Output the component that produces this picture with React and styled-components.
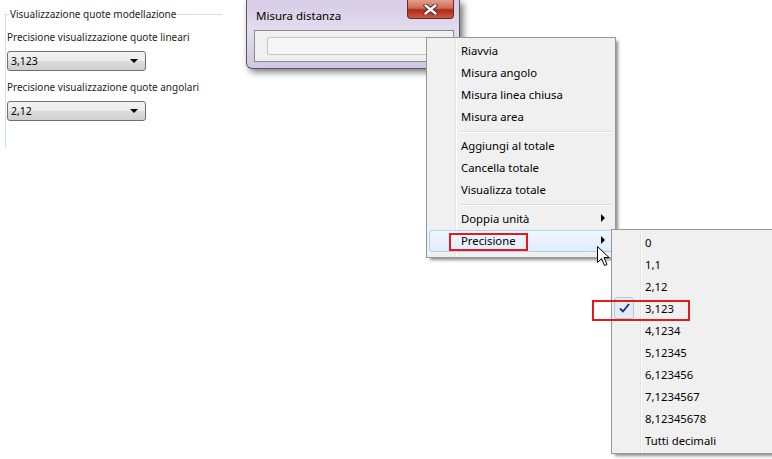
import styled, { createGlobalStyle } from "styled-components";

const GlobalStyle = createGlobalStyle`
  html, body {
    margin: 0;
    padding: 0;
    background: #ffffff;
  }
  body {
    font-family: "Noto Sans", "Open Sans", sans-serif;
    color: #000;
  }
`;

const mainItems = [
  { label: "Riavvia" },
  { label: "Misura angolo" },
  { label: "Misura linea chiusa" },
  { label: "Misura area" },
  { sep: true },
  { label: "Aggiungi al totale" },
  { label: "Cancella totale" },
  { label: "Visualizza totale" },
  { sep: true },
  { label: "Doppia unità", sub: true },
  { label: "Precisione", sub: true, active: true, marked: true },
];

const precisionItems = [
  "0",
  "1,1",
  "2,12",
  "3,123",
  "4,1234",
  "5,12345",
  "6,123456",
  "7,1234567",
  "8,12345678",
  "Tutti decimali",
];

const App = () => {
  return (
    <Page>
      <GlobalStyle />
      <OptionsPanel>
        <GroupBox>
          <Legend>Visualizzazione quote modellazione</Legend>
          <FieldLabel>Precisione visualizzazione quote lineari</FieldLabel>
          <Combo>
            <span>3,123</span>
            <ComboArrow />
          </Combo>
          <FieldLabel>Precisione visualizzazione quote angolari</FieldLabel>
          <Combo>
            <span>2,12</span>
            <ComboArrow />
          </Combo>
        </GroupBox>
      </OptionsPanel>

      <Dialog>
        <TitleBar>
          <Title>Misura distanza</Title>
          <CloseButton>
            <svg width="15" height="11" viewBox="0 0 15 11">
              <path
                d="M2.5 1.5 L12.5 9.5 M12.5 1.5 L2.5 9.5"
                stroke="#3a2a28"
                strokeWidth="4.2"
                strokeLinecap="round"
              />
              <path
                d="M2.5 1.5 L12.5 9.5 M12.5 1.5 L2.5 9.5"
                stroke="#ffffff"
                strokeWidth="2.4"
                strokeLinecap="round"
              />
            </svg>
          </CloseButton>
        </TitleBar>
        <ClientArea>
          <TextBox />
        </ClientArea>
      </Dialog>

      <ContextMenu>
        {mainItems.map((item, i) =>
          item.sep ? (
            <Separator key={i} />
          ) : (
            <MenuItem key={i} $active={item.active}>
              <span>{item.label}</span>
              {item.sub && <SubArrow />}
              {item.marked && <Marker $left={19} $top={2} $w={79} $h={18} />}
            </MenuItem>
          )
        )}
      </ContextMenu>

      <SubMenu>
        {precisionItems.map((label) => (
          <SubItem key={label}>
            {label === "3,123" && (
              <CheckBox>
                <svg width="11" height="10" viewBox="0 0 11 10">
                  <path
                    d="M1 5.5 L4 8.5 L10 1"
                    fill="none"
                    stroke="#1c2a86"
                    strokeWidth="1.8"
                  />
                </svg>
              </CheckBox>
            )}
            {label}
          </SubItem>
        ))}
      </SubMenu>

      <Marker $left={592} $top={300} $w={98} $h={21} />

      <Cursor width="13" height="21" viewBox="0 0 13 21">
        <path
          d="M0.5 0.5 L0.5 16.5 L4.5 12.5 L7.5 19.5 L10 18.5 L7 11.5 L12 11.5 Z"
          fill="#ffffff"
          stroke="#000000"
          strokeWidth="1"
        />
      </Cursor>
    </Page>
  );
};

export default App;

const Page = styled.div`
  position: relative;
  width: 772px;
  height: 459px;
  overflow: hidden;
  background: #ffffff;
`;

const OptionsPanel = styled.div`
  padding: 7px 0 0 5px;
  width: 217px;
`;

const GroupBox = styled.fieldset`
  margin: 0;
  padding: 0 0 0 1px;
  height: 140px;
  border: none;
  border-top: 1px solid #d5dfe5;
  border-left: 1px solid #d5dfe5;
  display: flex;
  flex-direction: column;
  align-items: flex-start;
`;

const Legend = styled.legend`
  font-size: 10px;
  color: #222222;
  padding: 0 1px;
  margin-left: 2px;
  line-height: 14px;
`;

const FieldLabel = styled.div`
  font-size: 10px;
  color: #1e1e1e;
  line-height: 14px;
  margin-top: 9px;
  margin-bottom: 7px;
`;

const Combo = styled.div`
  box-sizing: border-box;
  width: 139px;
  height: 20px;
  border: 1px solid #707070;
  border-radius: 3px;
  background: linear-gradient(#f3f3f3, #ebebeb 50%, #dddddd 50%, #cfcfcf);
  display: flex;
  align-items: center;
  padding: 0 7px 0 3px;
  font-size: 10.5px;
  color: #000;
`;

const ComboArrow = styled.i`
  margin-left: auto;
  width: 0;
  height: 0;
  border-left: 4px solid transparent;
  border-right: 4px solid transparent;
  border-top: 4px solid #000;
`;

const Dialog = styled.div`
  position: absolute;
  left: 246px;
  top: 0;
  width: 214px;
  box-sizing: border-box;
  border: 1px solid #5a5a5a;
  border-top: none;
  border-radius: 0 0 6px 6px;
  background: linear-gradient(180deg, #d6cce6 0%, #e3dcee 45%, #d2c6e2 100%);
  box-shadow: 3px 3px 7px rgba(0, 0, 0, 0.55);
  padding-bottom: 6px;
`;

const TitleBar = styled.div`
  height: 30px;
  display: flex;
  align-items: flex-start;
`;

const Title = styled.div`
  padding: 8px 0 0 9px;
  font-size: 11.5px;
  line-height: 16px;
  color: #000;
`;

const CloseButton = styled.div`
  margin-left: auto;
  margin-right: 5px;
  width: 47px;
  height: 19px;
  box-sizing: border-box;
  border: 1px solid #6b2a22;
  border-top: none;
  border-radius: 0 0 4px 4px;
  background: linear-gradient(#e2a08c 0%, #cf6a55 45%, #b02a18 55%, #c95a40 100%);
  display: flex;
  align-items: center;
  justify-content: center;
`;

const ClientArea = styled.div`
  margin: 0 5px 0 7px;
  height: 32px;
  box-sizing: border-box;
  border: 1px solid #8a8a8a;
  background: #f0f0f0;
  padding: 6px 0 0 12px;
`;

const TextBox = styled.div`
  height: 18px;
  width: 200px;
  box-sizing: border-box;
  border: 1px solid #c5c5c5;
  border-radius: 2px;
  background: #f6f6f6;
`;

const gutter = `linear-gradient(to right, transparent 28px, #e2e3e3 28px, #e2e3e3 29px, #ffffff 29px, #ffffff 30px, transparent 30px)`;

const ContextMenu = styled.div`
  position: absolute;
  left: 426px;
  top: 37px;
  width: 190px;
  box-sizing: border-box;
  border: 1px solid #979797;
  background: ${gutter}, #f0f0f0;
  padding: 2px 2px 5px 2px;
  box-shadow: 3px 3px 3px -1px rgba(0, 0, 0, 0.45);
  font-size: 11.3px;
`;

const MenuItem = styled.div`
  position: relative;
  height: 22px;
  box-sizing: border-box;
  display: flex;
  align-items: center;
  padding: 0 0 2px 31px;
  border: 1px solid ${(p) => (p.$active ? "#aecff7" : "transparent")};
  border-radius: 3px;
  background: ${(p) =>
    p.$active ? "linear-gradient(#f2f7fe, #e1ecfb)" : "transparent"};
  color: #000;
`;

const SubArrow = styled.i`
  margin-left: auto;
  margin-right: 7px;
  width: 0;
  height: 0;
  border-top: 4px solid transparent;
  border-bottom: 4px solid transparent;
  border-left: 4px solid #000;
`;

const Separator = styled.div`
  height: 7px;
  margin-left: 30px;
  background: linear-gradient(
    transparent 3px,
    #e0e0e0 3px,
    #e0e0e0 4px,
    #ffffff 4px,
    #ffffff 5px,
    transparent 5px
  );
`;

const SubMenu = styled.div`
  position: absolute;
  left: 611px;
  top: 229px;
  width: 170px;
  height: 225px;
  box-sizing: border-box;
  border: 1px solid #979797;
  background: ${gutter}, #f0f0f0;
  padding: 1px 2px;
  box-shadow: 3px 3px 3px -1px rgba(0, 0, 0, 0.45);
  font-size: 11.3px;
`;

const SubItem = styled.div`
  position: relative;
  height: 22px;
  display: flex;
  align-items: center;
  padding-left: 31px;
  color: #000;
`;

const CheckBox = styled.div`
  position: absolute;
  left: 0;
  top: 0;
  width: 20px;
  height: 22px;
  box-sizing: border-box;
  border: 1px solid #b3c6e2;
  border-radius: 3px;
  background: #e4ebf5;
  display: flex;
  align-items: center;
  justify-content: center;
`;

const Marker = styled.div`
  position: absolute;
  left: ${(p) => p.$left}px;
  top: ${(p) => p.$top}px;
  width: ${(p) => p.$w}px;
  height: ${(p) => p.$h}px;
  box-sizing: border-box;
  border: 2px solid #e3191b;
  pointer-events: none;
`;

const Cursor = styled.svg`
  position: absolute;
  left: 597px;
  top: 246px;
`;
